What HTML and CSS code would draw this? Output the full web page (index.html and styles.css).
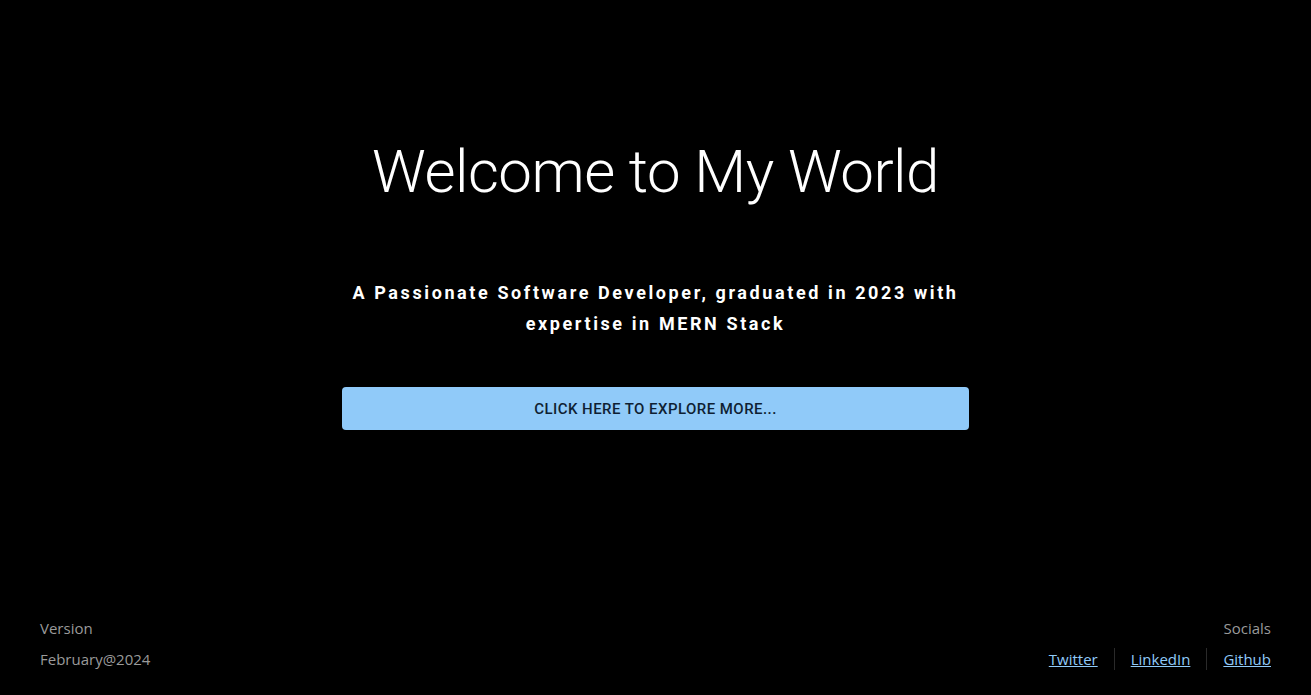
FILE: index.html
```html
<!DOCTYPE html>
<html lang="en">
<head>
<meta charset="utf-8">
<title>Welcome to My World</title>
<link rel="stylesheet" href="styles.css">
</head>
<body>
<div class="page">
  <main class="hero">
    <h1 class="title">Welcome to My World</h1>
    <p class="subtitle">A Passionate Software Developer, graduated in 2023 with expertise in MERN Stack</p>
    <button class="explore">Click here to explore more...</button>
  </main>
  <footer class="footer">
    <div class="col">
      <div class="label">Version</div>
      <div class="value">February@2024</div>
    </div>
    <div class="col right">
      <div class="label">Socials</div>
      <div class="links">
        <a href="#" class="link">Twitter</a>
        <span class="divider"></span>
        <a href="#" class="link">LinkedIn</a>
        <span class="divider"></span>
        <a href="#" class="link">Github</a>
      </div>
    </div>
  </footer>
</div>
</body>
</html>
```
FILE: styles.css
```css
html, body {
  margin: 0;
  padding: 0;
  background: #000;
  height: 100%;
}
.page {
  height: 695px;
  display: flex;
  flex-direction: column;
  font-family: Roboto, "Liberation Sans", sans-serif;
  color: #fff;
}
.hero {
  flex: 1;
  display: flex;
  flex-direction: column;
  align-items: center;
  padding-top: 134px;
}
.title {
  margin: 0;
  font-weight: 300;
  font-size: 60px;
  line-height: 76px;
  letter-spacing: -0.5px;
}
.subtitle {
  margin: 67px 0 0;
  width: 627px;
  text-align: center;
  font-weight: 700;
  font-size: 18px;
  line-height: 31px;
  letter-spacing: 2.6px;
}
.explore {
  margin-top: 48px;
  width: 627px;
  height: 43px;
  border: none;
  border-radius: 4px;
  background: #90caf9;
  color: #0f1f33;
  font-family: Roboto, "Liberation Sans", sans-serif;
  font-weight: 500;
  font-size: 15px;
  letter-spacing: 0.45px;
  text-transform: uppercase;
  cursor: pointer;
}
.footer {
  display: flex;
  justify-content: space-between;
  padding: 0 40px 25px;
  font-family: "Open Sans", "Noto Sans", sans-serif;
  font-size: 15px;
  color: #9a9a9a;
}
.col {
  display: flex;
  flex-direction: column;
  gap: 9px;
}
.col.right {
  align-items: flex-end;
}
.label, .value {
  line-height: 22px;
}
.links {
  display: flex;
  align-items: center;
  line-height: 22px;
}
.link {
  color: #90caf9;
  text-decoration: underline;
  padding: 0 16px;
}
.link:last-child {
  padding-right: 0;
}
.link:first-child {
  padding-left: 0;
}
.divider {
  width: 1px;
  height: 22px;
  background: #2a2a2a;
}
```
